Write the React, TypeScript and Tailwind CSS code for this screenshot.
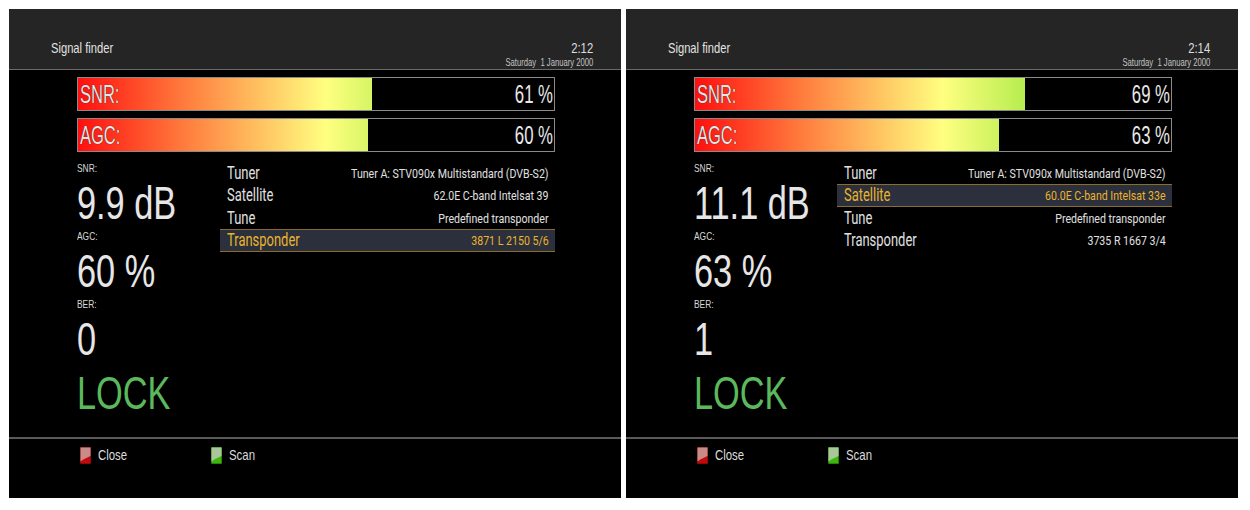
import type { ReactNode } from "react";

const SANS = "font-['Liberation_Sans',Arial,sans-serif]";
const MENU = "font-['Roboto','Liberation_Sans',sans-serif]";

type Row = [string, string];

type Screen = {
  time: string;
  snrPct: number;
  agcPct: number;
  snrFill: number;
  agcFill: number;
  snrDb: string;
  ber: string;
  rows: Row[];
  active: number;
};

const SCREENS: Screen[] = [
  {
    time: "2:12",
    snrPct: 61,
    agcPct: 60,
    snrFill: 294,
    agcFill: 290,
    snrDb: "9.9 dB",
    ber: "0",
    active: 3,
    rows: [
      ["Tuner", "Tuner A: STV090x Multistandard (DVB-S2)"],
      ["Satellite", "62.0E C-band Intelsat 39"],
      ["Tune", "Predefined transponder"],
      ["Transponder", "3871 L 2150 5/6"],
    ],
  },
  {
    time: "2:14",
    snrPct: 69,
    agcPct: 63,
    snrFill: 330,
    agcFill: 304,
    snrDb: "11.1 dB",
    ber: "1",
    active: 1,
    rows: [
      ["Tuner", "Tuner A: STV090x Multistandard (DVB-S2)"],
      ["Satellite", "60.0E C-band Intelsat 33e"],
      ["Tune", "Predefined transponder"],
      ["Transponder", "3735 R 1667 3/4"],
    ],
  },
];

// the whole UI is a squeezed 4:3 capture, so text is narrowed horizontally
function Narrow({
  children,
  right,
  squeeze = "scale-x-[0.73]",
}: {
  children: ReactNode;
  right?: boolean;
  squeeze?: string;
}) {
  return (
    <span className={`inline-block whitespace-nowrap ${squeeze} ${right ? "origin-right" : "origin-left"}`}>
      {children}
    </span>
  );
}

function Bar({ label, pct, fill }: { label: string; pct: number; fill: number }) {
  return (
    <div className="relative h-[34px] w-[478px] border border-[#8a8a8a] bg-black">
      <div className="h-full overflow-hidden" style={{ width: fill }}>
        <div className="h-full w-[476px] bg-[linear-gradient(90deg,#ff0f0f_0%,#ff7a3c_22%,#ffff80_52%,#9be63c_76%,#30d010_100%)]" />
      </div>
      <div className="absolute inset-0 flex items-center justify-between pl-[2px] pr-[1px] text-[25px] leading-none text-[#e8e8e8] [text-shadow:0_0_1px_#000]">
        <Narrow squeeze="scale-x-[0.66]">{label}</Narrow>
        <Narrow right squeeze="scale-x-[0.67]">
          {pct} %
        </Narrow>
      </div>
    </div>
  );
}

function Stat({ label, value }: { label: string; value: string }) {
  return (
    <div>
      <div className="h-[14px] text-[11.5px] leading-[12px] text-[#d8d8d8]">
        <Narrow>{label}</Narrow>
      </div>
      <div className="h-[54px] text-[47px] leading-[54px] text-[#e6e6e6]">
        <Narrow>{value}</Narrow>
      </div>
    </div>
  );
}

function ColorKey({ top, base, edge }: { top: string; base: string; edge: string }) {
  return (
    <svg width="11" height="17" viewBox="0 0 11 17" className="shrink-0">
      <rect width="11" height="17" rx="1" fill={edge} />
      <rect x="0.5" y="0.5" width="10" height="16" fill={base} />
      <path d="M0.5 0.5H10.5V9C8 10.5 4 11.5 0.5 14.5Z" fill={top} />
    </svg>
  );
}

function Panel({ s }: { s: Screen }) {
  return (
    <div className="flex h-[489px] w-[612px] flex-col bg-black">
      <header className="flex h-[61px] shrink-0 items-end justify-between border-b border-[#6a6a6a] bg-[#252525] pb-[1px] pl-[42px] pr-[28px]">
        <div className="pb-[11px] text-[15px] leading-[18px] text-[#e2e2e2]">
          <Narrow squeeze="scale-x-[0.745]">Signal finder</Narrow>
        </div>
        <div className="flex flex-col items-end text-[#dddddd]">
          <div className="text-[15.5px] leading-[16px]">
            <Narrow right>{s.time}</Narrow>
          </div>
          <div className="text-[10.5px] leading-[12px] text-[#c4c4c4]">
            <Narrow right>Saturday&nbsp; 1 January 2000</Narrow>
          </div>
        </div>
      </header>

      <main className="flex flex-1 flex-col pl-[67.5px] pt-[7px]">
        <div className="flex flex-col gap-[7px]">
          <Bar label="SNR:" pct={s.snrPct} fill={s.snrFill} />
          <Bar label="AGC:" pct={s.agcPct} fill={s.agcFill} />
        </div>
        <div className="mt-[10px] flex">
          <div className="w-[143.5px] shrink-0">
            <Stat label="SNR:" value={s.snrDb} />
            <Stat label="AGC:" value={`${s.agcPct} %`} />
            <Stat label="BER:" value={s.ber} />
            <div className="h-[54px] text-[47px] leading-[54px] text-[#5cb85c]">
              <Narrow>LOCK</Narrow>
            </div>
          </div>
          <div className={`w-[334.5px] ${MENU}`}>
            {s.rows.map(([k, v], i) => (
              <div
                key={k}
                className={`flex h-[22.4px] items-center justify-between px-[6px] pt-[1px] ${
                  i === s.active
                    ? "border-y border-[#8a6d2a] bg-[#2c2f3c] text-[#e8b52c]"
                    : "text-[#e0e0e0]"
                }`}
              >
                <span className="pl-[1px] text-[17.5px] leading-none">
                  <Narrow squeeze="scale-x-[0.74]">{k}</Narrow>
                </span>
                <span className="text-[13.5px] leading-none">
                  <Narrow right squeeze="scale-x-[0.785]">
                    {v}
                  </Narrow>
                </span>
              </div>
            ))}
          </div>
        </div>
      </main>

      <footer className="flex h-[61px] shrink-0 items-start border-t-2 border-[#5a5a5a] pl-[71px] pt-[7px] text-[15px] leading-[18px] text-[#dddddd]">
        <div className="flex w-[131px] items-center gap-[7px]">
          <ColorKey top="#c98a8a" base="#c80808" edge="#4a1010" />
          <Narrow squeeze="scale-x-[0.76]">Close</Narrow>
        </div>
        <div className="flex items-center gap-[7px]">
          <ColorKey top="#a9c79a" base="#3cb80c" edge="#1c4a10" />
          <Narrow squeeze="scale-x-[0.76]">Scan</Narrow>
        </div>
      </footer>
    </div>
  );
}

export default function App() {
  return (
    <div className={`flex h-[510px] w-[1250px] gap-[5px] overflow-hidden bg-white pl-[9px] pt-[9px] ${SANS}`}>
      {SCREENS.map((s) => (
        <Panel key={s.time} s={s} />
      ))}
    </div>
  );
}
